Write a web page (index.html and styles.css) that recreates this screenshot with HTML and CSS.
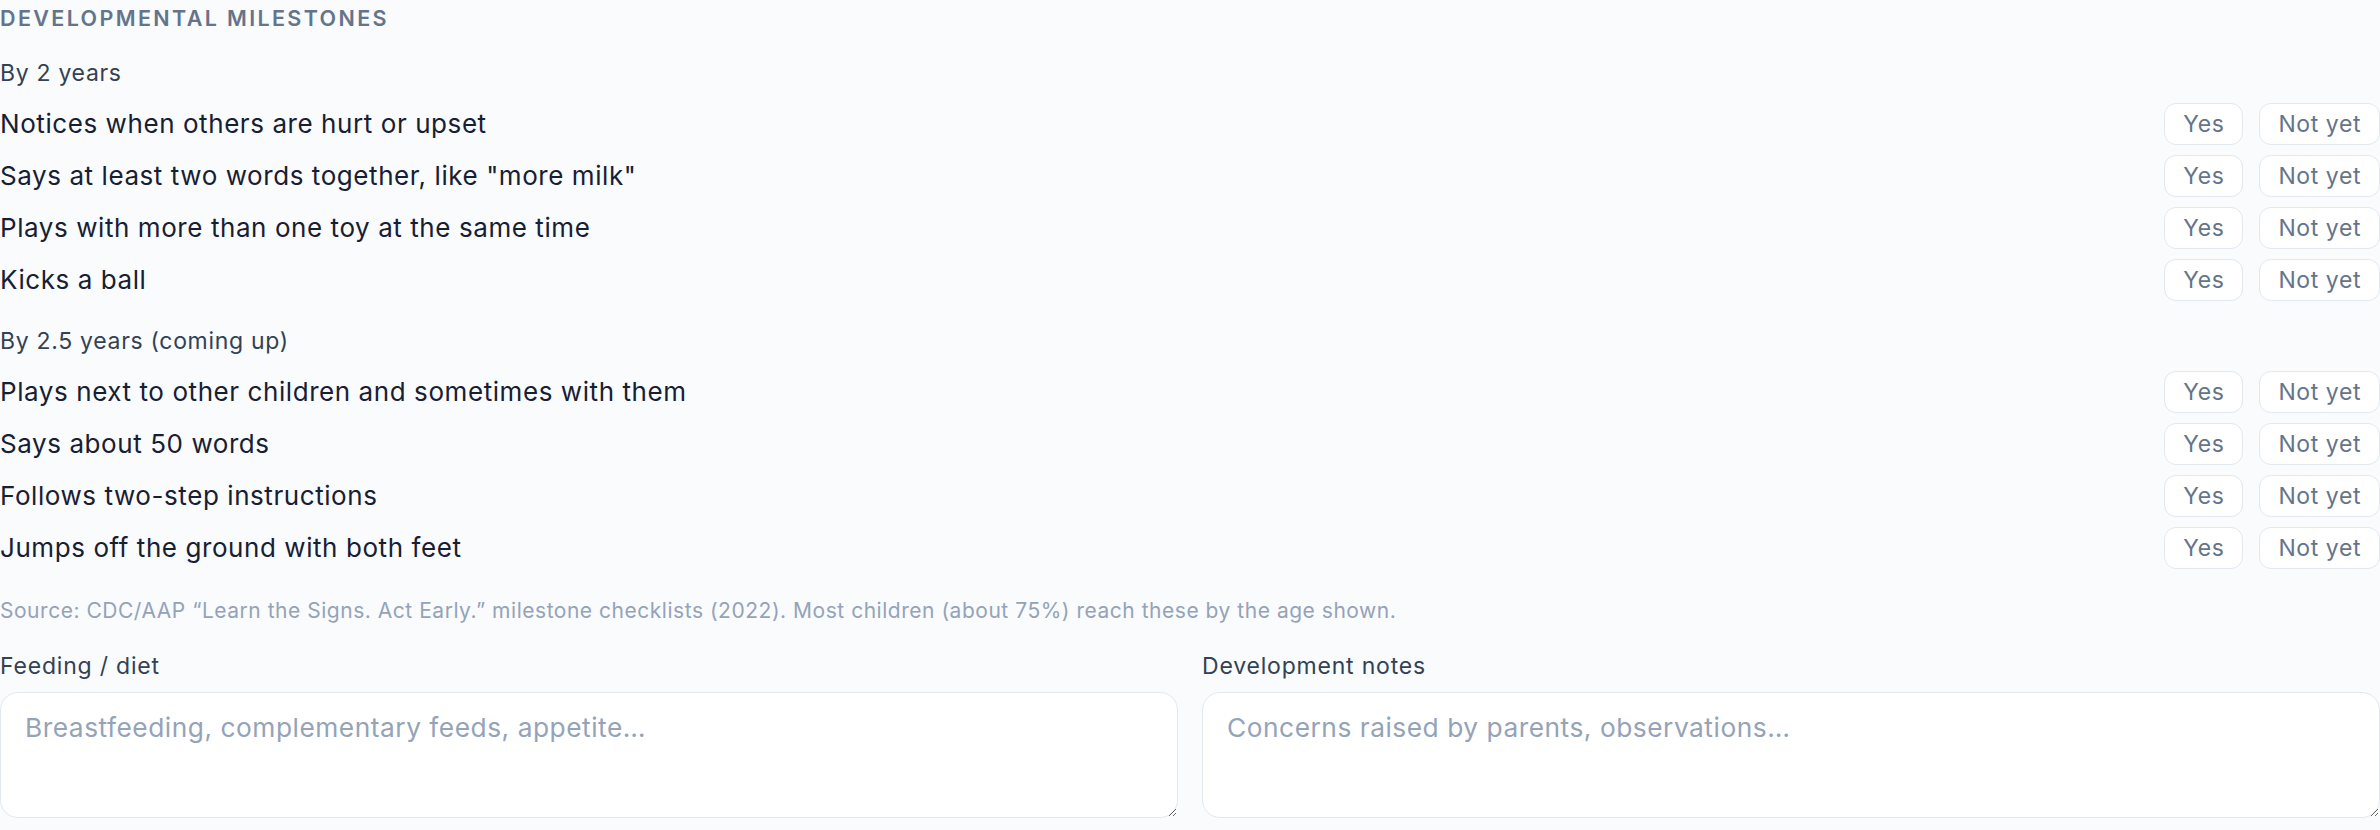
FILE: index.html
```html
<!DOCTYPE html>
<html lang="en">
<head>
<meta charset="utf-8">
<title>Developmental milestones</title>
<link rel="stylesheet" href="styles.css">
</head>
<body>
<main class="panel">
  <h2 class="title">Developmental milestones</h2>

  <section class="group">
    <h3 class="group-label">By 2 years</h3>
    <ul class="list">
      <li class="row"><span class="item">Notices when others are hurt or upset</span><span class="choices"><button class="btn btn-yes">Yes</button><button class="btn btn-no">Not yet</button></span></li>
      <li class="row"><span class="item">Says at least two words together, like "more milk"</span><span class="choices"><button class="btn btn-yes">Yes</button><button class="btn btn-no">Not yet</button></span></li>
      <li class="row"><span class="item">Plays with more than one toy at the same time</span><span class="choices"><button class="btn btn-yes">Yes</button><button class="btn btn-no">Not yet</button></span></li>
      <li class="row"><span class="item">Kicks a ball</span><span class="choices"><button class="btn btn-yes">Yes</button><button class="btn btn-no">Not yet</button></span></li>
    </ul>
  </section>

  <section class="group">
    <h3 class="group-label">By 2.5 years (coming up)</h3>
    <ul class="list">
      <li class="row"><span class="item">Plays next to other children and sometimes with them</span><span class="choices"><button class="btn btn-yes">Yes</button><button class="btn btn-no">Not yet</button></span></li>
      <li class="row"><span class="item">Says about 50 words</span><span class="choices"><button class="btn btn-yes">Yes</button><button class="btn btn-no">Not yet</button></span></li>
      <li class="row"><span class="item">Follows two-step instructions</span><span class="choices"><button class="btn btn-yes">Yes</button><button class="btn btn-no">Not yet</button></span></li>
      <li class="row"><span class="item">Jumps off the ground with both feet</span><span class="choices"><button class="btn btn-yes">Yes</button><button class="btn btn-no">Not yet</button></span></li>
    </ul>
  </section>

  <p class="source">Source: CDC/AAP “Learn the Signs. Act Early.” milestone checklists (2022). Most children (about 75%) reach these by the age shown.</p>

  <div class="notes">
    <label class="field">
      <span class="field-label">Feeding / diet</span>
      <textarea class="area" placeholder="Breastfeeding, complementary feeds, appetite…"></textarea>
    </label>
    <label class="field">
      <span class="field-label">Development notes</span>
      <textarea class="area" placeholder="Concerns raised by parents, observations…"></textarea>
    </label>
  </div>
</main>
</body>
</html>
```

FILE: styles.css
```css
* { box-sizing: border-box; }

html, body {
  margin: 0;
  padding: 0;
}

body {
  background: #f9fbfd;
  font-family: Inter, "Noto Sans", "Liberation Sans", sans-serif;
  color: #172033;
  letter-spacing: 0.02em;
}

.panel {
  display: flex;
  flex-direction: column;
  padding-top: 4px;
}

.title {
  margin: 0;
  font-size: 21.5px;
  line-height: 29px;
  font-weight: 600;
  letter-spacing: 0.11em;
  text-transform: uppercase;
  color: #64748b;
}

.group {
  margin-top: 24px;
}

.group-label {
  margin: 0 0 14px;
  font-size: 23px;
  line-height: 32px;
  font-weight: 400;
  letter-spacing: 0.03em;
  color: #334155;
}

.list {
  list-style: none;
  margin: 0;
  padding: 0;
  display: flex;
  flex-direction: column;
  gap: 10px;
}

.row {
  display: flex;
  align-items: center;
  justify-content: space-between;
  height: 42px;
}

.item {
  font-size: 26px;
  line-height: 36px;
  letter-spacing: 0.022em;
  color: #172033;
}

.choices {
  display: flex;
  gap: 16px;
}

.btn {
  height: 42px;
  padding: 0 18px;
  border: 1.5px solid #e2e8f0;
  border-radius: 12px;
  background: #ffffff;
  font-family: inherit;
  font-size: 23px;
  font-weight: 400;
  letter-spacing: 0.025em;
  color: #64748b;
  cursor: pointer;
}

.source {
  margin: 27px 0 0;
  font-size: 21px;
  line-height: 29px;
  letter-spacing: 0.025em;
  color: #94a3b8;
}

.notes {
  margin-top: 25px;
  display: grid;
  grid-template-columns: 1fr 1fr;
  gap: 24px;
}

.field {
  display: flex;
  flex-direction: column;
}

.field-label {
  font-size: 23px;
  line-height: 32px;
  font-weight: 400;
  letter-spacing: 0.035em;
  color: #334155;
  margin-bottom: 10px;
}

.area {
  height: 126px;
  padding: 17px 24px;
  border: 1.5px solid #e2e8f0;
  border-radius: 18px;
  background: #ffffff;
  font-family: inherit;
  font-size: 26.3px;
  line-height: 36px;
  letter-spacing: 0.02em;
  color: #0f172a;
  resize: vertical;
}

.area::placeholder {
  color: #94a3b8;
}
```
